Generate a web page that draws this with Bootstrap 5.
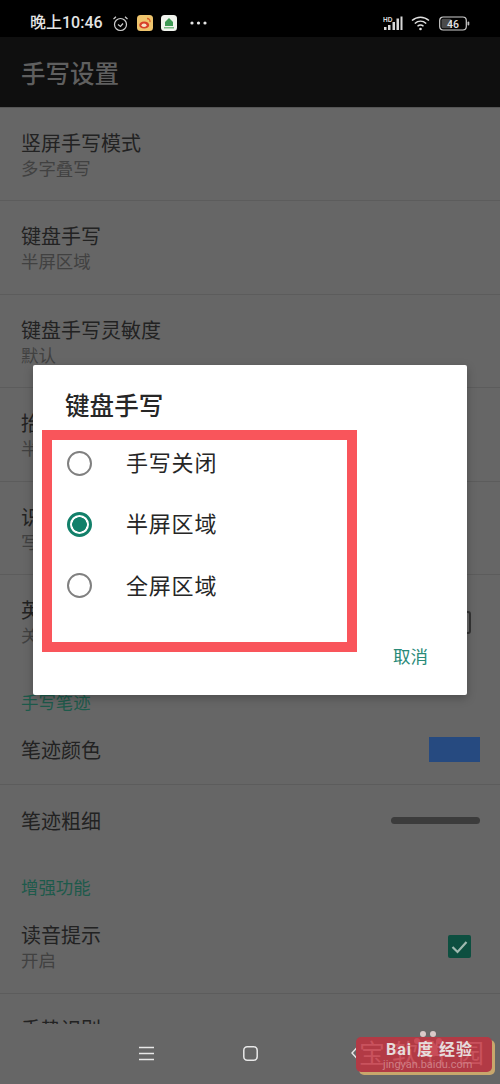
<!DOCTYPE html>
<html lang="zh">
<head>
  <meta charset="UTF-8">
  <meta name="viewport" content="width=device-width, initial-scale=1.0">
  <title>手写设置</title>
  <link href="https://cdn.jsdelivr.net/npm/bootstrap@5.3.3/dist/css/bootstrap.min.css" rel="stylesheet">
  <style>
    html, body { height: 1084px; overflow: hidden; }
    body {
      position: relative;
      width: 500px;
      background: #666;
      font-family: "Roboto", "Noto Sans CJK SC", sans-serif;
      color: #1f1f1f;
    }
    .phone { height: 1084px; }
    .status-bar { height: 37px; background: #000; color: #e4e4e4; padding: 9px 30px 0 30px; flex: none; }
    .status-time { font-size: 16px; font-weight: 500; line-height: 1; margin-right: 9px; white-space: nowrap; }
    .tool-bar {
      height: 71px; flex: none; background: #0f0f0f; color: #5f5f5f; border-bottom: 1px solid #555;
      font-size: 24.5px; font-weight: 500; padding: 7px 21px 0;
    }
    .setting-list { overflow: hidden; min-height: 0; }
    .setting-row {
      height: 93.4px; padding: 23px 20px 0 21px; border-bottom: 1px solid #5c5c5c;
    }
    .setting-row.one-line { height: 70px; padding-top: 3px; }
    .setting-row.no-line { border-bottom: 0; }
    .row-title { font-size: 20px; line-height: 26px; color: #222; }
    .row-sub { font-size: 17.4px; line-height: 24px; color: #414141; }
    .section-head { font-size: 17.4px; line-height: 24px; color: #1d5a4b; padding: 23px 0 0 21px; }
    .section-head.second { padding-top: 21px; }
    .swatch { width: 51px; height: 25px; background: #264a80; margin-top: -3px; }
    .thick-bar { width: 89px; height: 7px; border-radius: 4px; background: #3c3c3c; margin-top: -3px; }
    .tick-box { width: 23px; height: 23px; border-radius: 2px; background: #0d4f40; margin: 12px 9px 0 0; }
    .empty-box { width: 23px; height: 23px; border-radius: 3px; border: 2px solid #333; margin: 13px 9px 0 0; }
    .nav-strip { height: 60px; flex: none; background: #666; padding: 0 0 2px 139px; gap: 89px; }
    .nav-back { margin-left: 4px; }

    .dialog-box {
      position: absolute; left: 33px; top: 365px; width: 434px; height: 330px;
      background: #fff; border-radius: 2px; box-shadow: 0 3px 10px rgba(0,0,0,.25);
    }
    .dialog-title { font-size: 24.5px; font-weight: 500; line-height: 34px; color: #262626; padding: 25px 0 0 32px; letter-spacing: .1px; }
    .red-frame { width: 315px; height: 222px; margin: 6px 0 0 9px; border: 10px solid #f9555b; gap: 15.4px; }
    .pick-row { height: 46px; flex: none; padding-left: 14.5px; margin: 0; }
    .pick-row .form-check-input {
      width: 25px; height: 25px; margin: 0 34.5px 0 0; float: none; flex: none;
      border: 2px solid #808080; background-color: #fff;
    }
    .pick-row .form-check-input:checked {
      border: 3px solid #12806a; background-color: #fff;
      background-image: radial-gradient(circle, #12806a 0 7px, transparent 7.6px);
    }
    .pick-label { font-size: 22px; letter-spacing: .8px; line-height: 30px; color: #262626; padding-top: 2px; }
    .cancel-btn { font-size: 17.5px; line-height: 24px; color: #2a8a78; text-align: right; padding-right: 39px; margin-top: -7px; }

    .paw-stamp {
      position: absolute; left: 356px; top: 1037px; width: 136px; height: 35px;
      background: #b23a45; border-radius: 5px; box-shadow: 3px 3px 0 #c8a76c; overflow: visible;
    }
    .stamp-back { position: absolute; inset: 0; font-size: 26px; line-height: 35px; letter-spacing: 7px; color: #c9525d; white-space: nowrap; padding-left: 3px; }
    .stamp-front { position: absolute; left: 30px; top: 4px; font-size: 16px; line-height: 18px; font-weight: 700; color: #e6dcdc; white-space: nowrap; letter-spacing: 1px; }
    .stamp-url { position: absolute; left: 27px; top: 21px; font-size: 11px; line-height: 13px; color: #cf7f85; white-space: nowrap; }
    .stamp-paw { position: absolute; left: 56px; top: -8px; }
  </style>
</head>
<body>
  <div class="phone d-flex flex-column">
    <div class="status-bar d-flex align-items-center">
      <span class="status-time">晚上10:46</span>
      <svg width="17" height="17" viewBox="0 0 17 17" class="me-2" fill="none" stroke="#cfcfcf" stroke-width="1.2">
        <circle cx="8.5" cy="9.5" r="6"/><path d="M6 9.500l2.500 2 2.500-3M1.500 4L4 1.800M15.500 4L13 1.800"/>
      </svg>
      <svg width="16" height="16" viewBox="0 0 16 16" class="me-2">
        <rect width="16" height="16" rx="3.5" fill="#eec46d"/>
        <ellipse cx="7.2" cy="10" rx="5" ry="3.6" fill="#d8402a"/>
        <ellipse cx="7" cy="10.3" rx="2.5" ry="1.8" fill="#f6e3c5"/>
        <path d="M10 3.500c2.200 0 3.400 1.600 3 3.600" fill="none" stroke="#d8602a" stroke-width="1.3"/>
      </svg>
      <svg width="16" height="16" viewBox="0 0 16 16" style="margin-right:13px">
        <rect width="16" height="16" rx="3.5" fill="#f1f4ee"/>
        <path d="M8 3l4 4v4H4V7z" fill="#3f9a55"/>
        <rect x="3" y="12" width="10" height="1.5" fill="#7dbb85"/>
      </svg>
      <svg width="17" height="4" viewBox="0 0 17 4" fill="#e6e6e6"><circle cx="2" cy="2" r="1.6"/><circle cx="8.5" cy="2" r="1.6"/><circle cx="15" cy="2" r="1.6"/></svg>
      <span class="flex-grow-1"></span>
      <svg width="20" height="16" viewBox="0 0 20 16" fill="#d8d8d8" class="me-2">
        <rect x="1" y="12" width="2.5" height="3"/><rect x="5" y="10" width="2.5" height="5"/><rect x="9.5" y="7" width="2.5" height="8"/><rect x="13.5" y="3.500" width="2.500" height="11.500"/><rect x="17.500" y="1.500" width="2" height="13.500"/>
        <text x="0" y="6.500" font-size="6.500" font-weight="700" font-family="Liberation Sans">HD</text>
      </svg>
      <svg width="20" height="16" viewBox="0 0 20 16" fill="none" stroke="#e0e0e0" stroke-width="1.500" class="me-2">
        <path d="M1 5.500c5-4.500 12-4.500 17 0M3.800 8.500c3.400-3 8-3 11.400 0M6.500 11.200c2-1.700 4-1.700 6 0"/><circle cx="9.500" cy="14" r="1.300" fill="#e0e0e0" stroke="none"/>
      </svg>
      <svg width="31" height="15" viewBox="0 0 31 15">
        <rect x=".7" y="1" width="26.600" height="13" rx="3.500" fill="none" stroke="#cfcfcf" stroke-width="1.200"/>
        <rect x="2.500" y="2.800" width="10" height="9.400" rx="1.500" fill="#4a4a4a"/>
        <rect x="28.500" y="5.500" width="1.800" height="4" rx=".9" fill="#bdbdbd"/>
        <text x="14" y="11.500" font-size="10.500" text-anchor="middle" font-weight="500" font-family="Roboto" fill="#e4e4e4">46</text>
      </svg>
    </div>

    <div class="tool-bar d-flex align-items-center">手写设置</div>

    <div class="setting-list flex-grow-1">
      <div class="setting-row"><div class="row-title">竖屏手写模式</div><div class="row-sub">多字叠写</div></div>
      <div class="setting-row"><div class="row-title">键盘手写</div><div class="row-sub">半屏区域</div></div>
      <div class="setting-row"><div class="row-title">键盘手写灵敏度</div><div class="row-sub">默认</div></div>
      <div class="setting-row"><div class="row-title">抬笔等待时间</div><div class="row-sub">半秒</div></div>
      <div class="setting-row"><div class="row-title">识别模式</div><div class="row-sub">写完识别</div></div>
      <div class="setting-row no-line d-flex justify-content-between">
        <div><div class="row-title">英文手写</div><div class="row-sub">关闭</div></div>
        <div class="empty-box"></div>
      </div>
      <div class="section-head">手写笔迹</div>
      <div class="setting-row one-line d-flex align-items-center justify-content-between">
        <div class="row-title">笔迹颜色</div><div class="swatch"></div>
      </div>
      <div class="setting-row one-line no-line d-flex align-items-center justify-content-between">
        <div class="row-title">笔迹粗细</div><div class="thick-bar"></div>
      </div>
      <div class="section-head second">增强功能</div>
      <div class="setting-row d-flex justify-content-between">
        <div><div class="row-title">读音提示</div><div class="row-sub">开启</div></div>
        <div class="tick-box d-flex align-items-center justify-content-center">
          <svg width="17" height="14" viewBox="0 0 17 14" fill="none" stroke="#9fb9b0" stroke-width="2.200"><path d="M1.500 7l5 5 9-10"/></svg>
        </div>
      </div>
      <div class="setting-row"><div class="row-title">手势识别</div></div>
    </div>

    <div class="nav-strip d-flex align-items-center">
      <svg width="15" height="15" viewBox="0 0 15 15" stroke="#e8e8e8" stroke-width="1.300"><path d="M0 1.500h15M0 7.500h15M0 13.500h15"/></svg>
      <svg width="15" height="15" viewBox="0 0 15 15" fill="none" stroke="#e8e8e8" stroke-width="1.500"><rect x=".8" y=".8" width="13.400" height="13.400" rx="3.500"/></svg>
      <svg class="nav-back" width="8" height="14" viewBox="0 0 8 14" fill="none" stroke="#e8e8e8" stroke-width="1.400"><path d="M6.500 1L1 7l5.500 6"/></svg>
    </div>
  </div>

  <div class="dialog-box d-flex flex-column">
    <div class="dialog-title">键盘手写</div>
    <div class="red-frame d-flex flex-column">
      <label class="pick-row d-flex align-items-center">
        <input class="form-check-input" type="radio" name="hw">
        <span class="pick-label">手写关闭</span>
      </label>
      <label class="pick-row d-flex align-items-center">
        <input class="form-check-input" type="radio" name="hw" checked>
        <span class="pick-label">半屏区域</span>
      </label>
      <label class="pick-row d-flex align-items-center">
        <input class="form-check-input" type="radio" name="hw">
        <span class="pick-label">全屏区域</span>
      </label>
    </div>
    <div class="cancel-btn">取消</div>
  </div>

  <div class="paw-stamp">
    <div class="stamp-back">宝软件园</div>
    <svg class="stamp-paw" width="34" height="34" viewBox="0 0 34 34" fill="#d9c9c9">
      <circle cx="11" cy="5" r="3"/><circle cx="21" cy="5" r="3"/>
      <circle cx="5" cy="12" r="3" fill="#c94c58"/><circle cx="27" cy="12" r="3" fill="#c94c58"/>
      <path d="M16 11c5 0 10 6 10 12 0 5-5 5-10 4-5 1-10 1-10-4 0-6 5-12 10-12z" fill="#c94c58"/>
    </svg>
    <div class="stamp-front">Bai 度 经验</div>
    <div class="stamp-url">jingyan.baidu.com</div>
  </div>
</body>
</html>
